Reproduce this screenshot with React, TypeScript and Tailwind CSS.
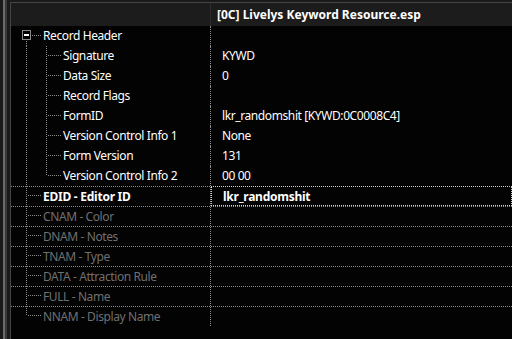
import React from "react";

type Gutter = "pipe" | "tee" | "elbow" | "box";

type Row = {
  label: string;
  value?: string;
  gutter: Gutter[];
  bold?: boolean;
  dim?: boolean;
  sep?: boolean;
  focus?: boolean;
};

const rows: Row[] = [
  { label: "Record Header", gutter: ["box"] },
  { label: "Signature", value: "KYWD", gutter: ["pipe", "tee"] },
  { label: "Data Size", value: "0", gutter: ["pipe", "tee"] },
  { label: "Record Flags", gutter: ["pipe", "tee"] },
  { label: "FormID", value: "lkr_randomshit [KYWD:0C0008C4]", gutter: ["pipe", "tee"] },
  { label: "Version Control Info 1", value: "None", gutter: ["pipe", "tee"] },
  { label: "Form Version", value: "131", gutter: ["pipe", "tee"] },
  { label: "Version Control Info 2", value: "00 00", gutter: ["pipe", "elbow"] },
  { label: "EDID - Editor ID", value: "lkr_randomshit", gutter: ["tee"], bold: true, sep: true, focus: true },
  { label: "CNAM - Color", gutter: ["tee"], dim: true, sep: true },
  { label: "DNAM - Notes", gutter: ["tee"], dim: true, sep: true },
  { label: "TNAM - Type", gutter: ["tee"], dim: true, sep: true },
  { label: "DATA - Attraction Rule", gutter: ["tee"], dim: true, sep: true },
  { label: "FULL - Name", gutter: ["tee"], dim: true, sep: true },
  { label: "NNAM - Display Name", gutter: ["elbow"], dim: true, sep: true },
];

const dot = { stroke: "#8a8a8a", strokeWidth: 1, strokeDasharray: "1 1" };

// one 20px indent column of the tree
const TreeCell = ({ type }: { type: Gutter }) => (
  <svg width="20" height="20" className="shrink-0 overflow-visible" shapeRendering="crispEdges">
    {type === "pipe" && <line x1="10.5" y1="0" x2="10.5" y2="20" {...dot} />}
    {type === "tee" && (
      <>
        <line x1="10.5" y1="0" x2="10.5" y2="20" {...dot} />
        <line x1="12" y1="9.5" x2="25" y2="9.5" {...dot} />
      </>
    )}
    {type === "elbow" && (
      <>
        <line x1="10.5" y1="0" x2="10.5" y2="10" {...dot} />
        <line x1="12" y1="9.5" x2="25" y2="9.5" {...dot} />
      </>
    )}
    {type === "box" && (
      <>
        <rect x="6.5" y="4.5" width="8" height="9" fill="#000" stroke="#8a8a8a" />
        <line x1="8" y1="9" x2="13" y2="9" stroke="#ffffff" strokeWidth="1.4" />
        <line x1="16" y1="9.5" x2="25" y2="9.5" {...dot} />
        <line x1="10.5" y1="15" x2="10.5" y2="20" {...dot} />
      </>
    )}
  </svg>
);

export default function App() {
  return (
    <div
      className="w-[512px] h-[339px] bg-[#1a1a1a] flex overflow-hidden text-[12px]"
      style={{ fontFamily: '"Noto Sans", "Open Sans", sans-serif' }}
    >
      {/* left splitter */}
      <div className="w-[3px] shrink-0" />
      <div className="w-[2px] shrink-0 bg-[#6a6a6a]" />
      <div className="w-[2px] shrink-0 bg-[#383838]" />
      <div className="w-[3px] shrink-0" />

      {/* record view */}
      <div className="flex-1 mt-[2px] border-l border-t border-[#454545] bg-[#030303] flex flex-col">
        <div className="h-[23px] bg-[#1c1c1c] flex items-center shrink-0">
          <div className="w-[200px] h-full border-r border-[#2c2c2c] shrink-0" />
          <div className="pl-[6px] font-bold text-white whitespace-nowrap">
            [0C] Livelys Keyword Resource.esp
          </div>
        </div>

        {rows.map((r) => (
          <div
            key={r.label}
            className={
              "h-[20px] flex shrink-0 " +
              (r.sep ? "border-t border-dotted border-[#8a8a8a] " : "") +
              (r.dim ? "text-[#707070] " : "text-white ") +
              (r.bold ? "font-bold tracking-[-0.25px]" : "tracking-[-0.4px]")
            }
          >
            <div className="w-[200px] shrink-0 flex items-start border-r border-dotted border-[#8a8a8a] pl-[5px] leading-[19px]">
              {r.sep ? (
                <div className="-mt-px flex">
                  {r.gutter.map((g, i) => (
                    <TreeCell key={i} type={g} />
                  ))}
                </div>
              ) : (
                r.gutter.map((g, i) => <TreeCell key={i} type={g} />)
              )}
              <span className="pl-[7px] whitespace-nowrap">{r.label}</span>
            </div>
            <div
              className={
                "flex-1 pl-[11px] leading-[19px] whitespace-nowrap " +
                (r.focus ? "border border-dotted border-[#d0d0d0] -mt-px pl-[10px]" : "")
              }
            >
              {r.value}
            </div>
          </div>
        ))}
      </div>
    </div>
  );
}
